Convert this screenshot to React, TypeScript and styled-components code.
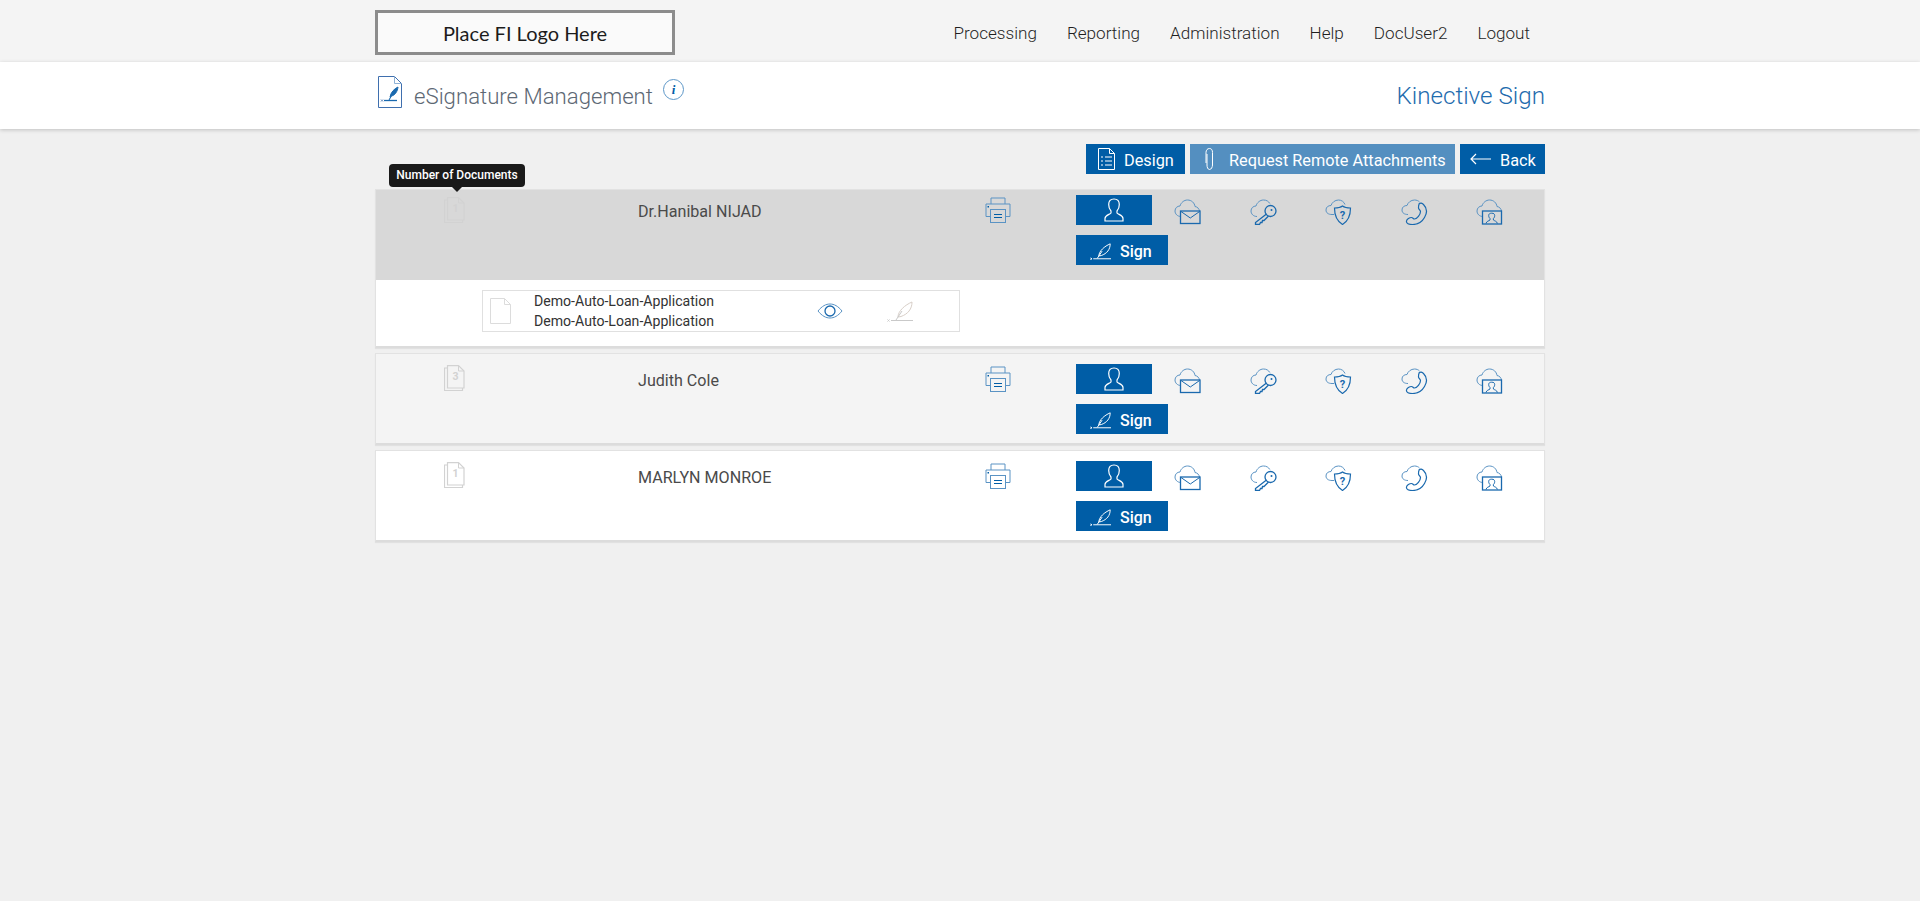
import React from "react";
import styled, { createGlobalStyle } from "styled-components";

const Global = createGlobalStyle`
  html, body { margin: 0; padding: 0; background: #f0f0f0; }
  body { font-family: Roboto, "Liberation Sans", sans-serif; min-height: 901px; overflow: hidden; }
  * { box-sizing: border-box; }
`;

const Container = styled.div`
  width: 1170px;
  margin: 0 auto;
  display: flex;
  align-items: flex-start;
  justify-content: space-between;
`;
const TopBar = styled.header`
  height: 62px;
  background: #f4f4f4;
`;
const Logo = styled.div`
  width: 300px;
  height: 45px;
  margin-top: 10px;
  border: 3px solid #8c8c8c;
  background: #fafafa;
  display: flex;
  align-items: center;
  justify-content: center;
  font: 400 20px Lato, sans-serif;
  color: #1c1c1c;
`;
const Nav = styled.nav`
  display: flex;
  gap: 30px;
  padding: 23px 15px 0 0;
`;
const NavLink = styled.a`
  font-size: 17.1px;
  font-weight: 300;
  color: #1f1f1f;
  line-height: 20px;
`;
const TitleBar = styled.div`
  height: 67px;
  background: #fff;
  box-shadow: 0 1px 4px rgba(0, 0, 0, 0.2);
  position: relative;
`;
const Title = styled.div`
  display: flex;
  align-items: flex-start;
  padding: 14px 0 0 3px;
`;
const TitleText = styled.h1`
  margin: 6px 0 0 12px;
  font-size: 22.2px;
  line-height: 28px;
  font-weight: 300;
  color: #5d6874;
`;
const InfoDot = styled.span`
  width: 21px;
  height: 21px;
  margin: 3px 0 0 10px;
  border: 1px solid #5d97c8;
  border-radius: 50%;
  display: flex;
  align-items: center;
  justify-content: center;
  font: italic 700 13px "Liberation Serif", serif;
  color: #005da6;
`;
const Brand = styled.div`
  padding-top: 19px;
  font-size: 24.2px;
  line-height: 30px;
  font-weight: 300;
  color: #1f6cae;
`;
const Toolbar = styled.div`
  width: 1170px;
  margin: 15px auto 0;
  height: 30px;
  display: flex;
  justify-content: flex-end;
  gap: 5px;
`;
const ActionButton = styled.button<{ $muted?: boolean; $w: number; $gap: number; $pad: number }>`
  width: ${(p) => p.$w}px;
  height: 30px;
  border: 0;
  padding: 2px 0 0 ${(p) => p.$pad}px;
  background: ${(p) => (p.$muted ? "#548fc0" : "#005da6")};
  color: #fff;
  display: flex;
  align-items: center;
  gap: ${(p) => p.$gap}px;
  font: 400 16.3px Roboto, sans-serif;
  svg { margin-top: -2px; }
`;
const List = styled.main`
  width: 1170px;
  margin: 15px auto 0;
  display: flex;
  flex-direction: column;
  gap: 5px;
`;
const Card = styled.section<{ $bg: string }>`
  background: ${(p) => p.$bg};
  border: 1px solid #e2e2e2;
  border-bottom: 2px solid #dcdcdc;
  box-shadow: 0 1px 1px rgba(0, 0, 0, 0.06);
`;
const RowGrid = styled.div<{ $tight?: boolean; $bg: string }>`
  display: grid;
  grid-template-columns: 262px 347px 91px 1fr;
  background: ${(p) => p.$bg};
  height: ${(p) => (p.$tight ? 90 : 89)}px;
  padding-top: ${(p) => (p.$tight ? 5 : 10)}px;
`;
const DocCell = styled.div<{ $tight?: boolean }>`
  padding: ${(p) => (p.$tight ? 2 : 1)}px 0 0 68px;
  color: #d2d2d2;
`;
const NameCell = styled.div`
  font-size: 16.1px;
  line-height: 24px;
  color: #4a4a4a;
  padding-top: 5px;
`;
const PrintCell = styled.div`
  padding-top: 2px;
  color: #5a93c4;
`;
const Actions = styled.div`
  display: grid;
  grid-template-columns: 92px repeat(5, 75.5px);
  grid-template-rows: 30px 30px;
  row-gap: 10px;
  align-content: start;
`;
const PersonButton = styled.button`
  width: 76px;
  height: 30px;
  border: 0;
  padding: 0;
  background: #005da6;
  color: #fff;
  display: flex;
  align-items: center;
  justify-content: center;
`;
const SignButton = styled.button`
  grid-column: 1;
  grid-row: 2;
  width: 92px;
  height: 30px;
  border: 0;
  padding: 2px 0 0 14px;
  background: #005da6;
  color: #fff;
  display: flex;
  align-items: center;
  gap: 9px;
  font: 500 16px Roboto, sans-serif;
`;
const ChannelIcon = styled.span`
  padding: 4px 0 0 6px;
  color: #1a69ae;
`;
const DocDetail = styled.div`
  height: 66px;
  background: #fff;
  padding: 10px 0 0 106px;
`;
const DocBox = styled.div`
  width: 478px;
  height: 42px;
  border: 1px solid #e0e0e0;
  display: grid;
  grid-template-columns: 51px 283px 70px 1fr;
  align-items: center;
`;
const DocNames = styled.div`
  font-size: 14.1px;
  line-height: 20px;
  color: #333;
`;
const PageIcon = styled.span`
  padding: 4px 0 0 7px;
  color: #dcdcdc;
`;

const CloudPath = () => (
  <path
    d="M7 17.500C3.500 17.500 1 15 1 12c0-3 2.300-5 5-5 .9-3.300 4-6 7.500-6 4 0 7 2.800 7.500 6.500 2.400.3 4.500 2.400 4.500 5"
    fill="none"
    stroke="#5a93c4"
  />
);

const ic = { fill: "none", stroke: "currentColor", strokeWidth: 1 };

const Mail = () => (
  <svg width="27" height="26" viewBox="0 0 27 26">
    <CloudPath />
    <rect x="6.500" y="12" width="19.500" height="12.500" fill="none" stroke="currentColor" strokeWidth="1.300" />
    <path d="M7 12.500l9.300 6.500 9.300-6.500" {...ic} />
  </svg>
);
const Key = () => (
  <svg width="28" height="26" viewBox="0 0 28 26">
    <path d="M7 17.500C3.500 17.500 1 15 1 12c0-3 2.300-5 5-5 .9-3.300 4-6 7.500-6 3 0 5 1.300 6.300 3.500" fill="none" stroke="#5a93c4" />
    <circle cx="20.500" cy="12" r="5.500" fill="none" stroke="currentColor" strokeWidth="1.300" />
    <circle cx="21.500" cy="11" r="1" fill="currentColor" />
    <path d="M16.500 15L5.500 23.500v2h4l1-2h1.500l.5-2h1.500l4.500-4.500" fill="none" stroke="currentColor" strokeWidth="1.300" />
  </svg>
);
const Shield = () => (
  <svg width="28" height="26" viewBox="0 0 28 26">
    <path d="M9 15.500H7C3.500 15.500 1 14 1 11c0-3 2.300-4.500 5-4.500 .9-3 4-5.500 7.500-5.500 3 0 5.500 1.800 6.500 4.500" fill="none" stroke="#5a93c4" />
    <path d="M17.500 7c2 1.500 5.500 2 8 2 0 7-1.500 12.500-8 16.500-6.500-4-8-9.500-8-16.500 2.500 0 6-.5 8-2z" fill="none" stroke="currentColor" strokeWidth="1.200" />
    <text x="17.500" y="20" textAnchor="middle" fontFamily="Roboto" fontWeight="700" fontSize="11" fill="currentColor">?</text>
  </svg>
);
const Phone = () => (
  <svg width="28" height="26" viewBox="0 0 28 26">
    <path d="M7 15.500C3.500 15.500 1 14 1 11c0-3 2.300-4.500 5-4.500 .9-3 4-5.500 7.500-5.500 2 0 3.800.7 5 2" fill="none" stroke="#5a93c4" />
    <path d="M18 5c1.500-1.500 3-1 4.500.5 3.500 3.500 4 8 1 13-2.500 4.500-7 7-12 7-3.500 0-6.500-1-6-3.500.4-2 3-3.500 5-3.500 1.500 0 1.500 1.500 3 1.500 2.500 0 6-4.500 6-7.500 0-1.500-2-2-2-3.500 0-1.500 0-3 .5-3.500z" fill="none" stroke="currentColor" strokeWidth="1.200" />
  </svg>
);
const Video = () => (
  <svg width="27" height="26" viewBox="0 0 27 26">
    <CloudPath />
    <rect x="6.500" y="12" width="19" height="13" fill="none" stroke="currentColor" strokeWidth="1.300" />
    <path d="M10 24.500c.5-2.500 3-2.500 4-3.500v-1.500c-1-.8-1.300-2-1.300-3 0-1.500 1-2.300 3-2.300s3 .8 3 2.300c0 1-.3 2.200-1.300 3V21c1 1 3.500 1 4 3.500" {...ic} />
  </svg>
);
const Person = () => (
  <svg width="20" height="24" viewBox="0 0 20 24" fill="none" stroke="currentColor" strokeWidth="1.200">
    <path d="M7 15v-2c-1.500-1.500-2.300-4-2.300-6.500C4.700 3 6.500 1 10 1s5.300 2 5.300 5.500c0 2.500-.8 5-2.300 6.500v2c1 1.500 6 2 6 5.500V23H1v-2.500C1 17 6 16.500 7 15z" />
  </svg>
);
const Feather = ({ muted }: { muted?: boolean }) => (
  <svg width={muted ? 26 : 21} height={muted ? 21 : 17} viewBox="0 0 26 21" fill="none" stroke={muted ? "#c9c9c9" : "currentColor"} strokeWidth={muted ? 1 : 1.200}>
    <path d="M11 16C11 10 18 4 25 1c0 7-4 12-11 14.500z" stroke={muted ? "#d8cfc8" : "currentColor"} />
    <path d="M15 10l-6 9M4 19.500h22" />
    <path d="M.5 18.500l2 2M2.500 18.500l-2 2" />
  </svg>
);
const Printer = () => (
  <svg width="26" height="26" viewBox="0 0 26 26" fill="none" stroke="currentColor">
    <path d="M6 7V1h14v6" />
    <path d="M5.500 19.500H1V7h24v12.500h-4.500" />
    <rect x="5.500" y="12.500" width="15" height="13" />
    <path d="M9 17.500h8M9 20.500h8" stroke="#005da6" />
    <rect x="2.500" y="9" width="1.500" height="1.500" fill="#005da6" stroke="none" />
  </svg>
);
const Stack = ({ n }: { n: number }) => (
  <svg width="21" height="26" viewBox="0 0 21 26" fill="none" stroke="currentColor" strokeWidth="1.200">
    <path d="M3.500 3H.5v22.500h18V23" />
    <path d="M3.500 23V.6h11l5.500 5.500V23z" />
    <path d="M14.500.6V6H20" strokeWidth="1" />
    <text x="11.500" y="15" textAnchor="middle" fontFamily="Roboto" fontWeight="700" fontSize="10.500" fill="currentColor" stroke="none">{n}</text>
  </svg>
);
const Page = () => (
  <svg width="21" height="26" viewBox="0 0 21 26" fill="none" stroke="currentColor">
    <path d="M.5.500h14l6 6v19H.5z" />
    <path d="M14.500.5v6h6" />
  </svg>
);
const Eye = () => (
  <svg width="26" height="18" viewBox="0 0 26 18" fill="none">
    <path d="M1 9C5 4 9 2 13 2s8 2 12 7c-4 5-8 7-12 7S5 14 1 9z" stroke="#5a93c4" />
    <circle cx="13" cy="9" r="5" stroke="#1a69ae" strokeWidth="1.300" />
  </svg>
);
const TitleDoc = () => (
  <svg width="24" height="32" viewBox="0 0 24 32" fill="none">
    <path d="M.5.500h16l7 7v24H.5z" stroke="#3f6fae" />
    <path d="M16.500.5v7h7" stroke="#8fb2d6" />
    <path d="M12 21c1-5 4-8 8-10-.5 4-2.500 8-6.500 9L11 24" fill="#1a69ae" stroke="#1a69ae" />
    <path d="M6 24.500h13" stroke="#1a69ae" strokeWidth="1.300" />
    <path d="M3 23.500l2 2M5 23.500l-2 2" stroke="#3f6fae" strokeWidth=".8" />
  </svg>
);
const ListDoc = () => (
  <svg width="17" height="22" viewBox="0 0 17 22" fill="none" stroke="#fff">
    <path d="M.5.500h11l5 5v16H.5z" />
    <path d="M11.500.5v5h5" />
    <path d="M3 9h2M7 9h7M3 13h2M7 13h7M3 17h2M7 17h7" strokeWidth="1.200" />
  </svg>
);
const Clip = () => (
  <svg width="9" height="22" viewBox="0 0 9 22" fill="none" stroke="#fff">
    <path d="M2 6v11c0 2 .7 4.500 2.500 4.500S7.500 19 7.500 17V4.500C7.500 2 6.500.5 4.500.5S1 2 1 4.500V15" />
  </svg>
);
const Arrow = () => (
  <svg width="21" height="12" viewBox="0 0 21 12" fill="none" stroke="#fff" strokeWidth="1.200">
    <path d="M21 6H1M6 1L1 6l5 5" />
  </svg>
);

const Tooltip = styled.div`
  position: absolute;
  left: 389px;
  top: 164px;
  width: 136px;
  height: 23px;
  border-radius: 4px;
  background: #1a1a1a;
  color: #fff;
  font: 500 12px/23px Roboto, sans-serif;
  text-align: center;
  &::after {
    content: "";
    position: absolute;
    left: 63px;
    bottom: -5px;
    border: 5px solid transparent;
    border-bottom: 0;
    border-top-color: #1a1a1a;
  }
`;
const Shell = styled.div`
  position: relative;
`;

const people = [
  { name: "Dr.Hanibal NIJAD", n: 1, bg: "#d8d8d8", open: true },
  { name: "Judith Cole", n: 3, bg: "#f4f4f4", open: false },
  { name: "MARLYN MONROE", n: 1, bg: "#ffffff", open: false },
];

export default function App() {
  return (
    <Shell>
      <Global />
      <TopBar>
        <Container>
          <Logo>Place FI Logo Here</Logo>
          <Nav>
            {["Processing", "Reporting", "Administration", "Help", "DocUser2", "Logout"].map((t) => (
              <NavLink key={t}>{t}</NavLink>
            ))}
          </Nav>
        </Container>
      </TopBar>
      <TitleBar>
        <Container>
          <Title>
            <TitleDoc />
            <TitleText>eSignature Management</TitleText>
            <InfoDot>i</InfoDot>
          </Title>
          <Brand>Kinective Sign</Brand>
        </Container>
      </TitleBar>
      <Toolbar>
        <ActionButton $w={99} $gap={9} $pad={12}><ListDoc />Design</ActionButton>
        <ActionButton $muted $w={265} $gap={15} $pad={15}><Clip />Request Remote Attachments</ActionButton>
        <ActionButton $w={85} $gap={9} $pad={10}><Arrow />Back</ActionButton>
      </Toolbar>
      <List>
        {people.map((p) => (
          <Card key={p.name} $bg={p.bg}>
            <RowGrid $tight={p.open} $bg={p.bg}>
              <DocCell $tight={p.open}><Stack n={p.n} /></DocCell>
              <NameCell>{p.name}</NameCell>
              <PrintCell><Printer /></PrintCell>
              <Actions>
                <PersonButton><Person /></PersonButton>
                <ChannelIcon><Mail /></ChannelIcon>
                <ChannelIcon><Key /></ChannelIcon>
                <ChannelIcon><Shield /></ChannelIcon>
                <ChannelIcon><Phone /></ChannelIcon>
                <ChannelIcon><Video /></ChannelIcon>
                <SignButton><Feather />Sign</SignButton>
              </Actions>
            </RowGrid>
            {p.open && (
              <DocDetail>
                <DocBox>
                  <PageIcon><Page /></PageIcon>
                  <DocNames>Demo-Auto-Loan-Application<br />Demo-Auto-Loan-Application</DocNames>
                  <Eye />
                  <Feather muted />
                </DocBox>
              </DocDetail>
            )}
          </Card>
        ))}
      </List>
      <Tooltip>Number of Documents</Tooltip>
    </Shell>
  );
}
